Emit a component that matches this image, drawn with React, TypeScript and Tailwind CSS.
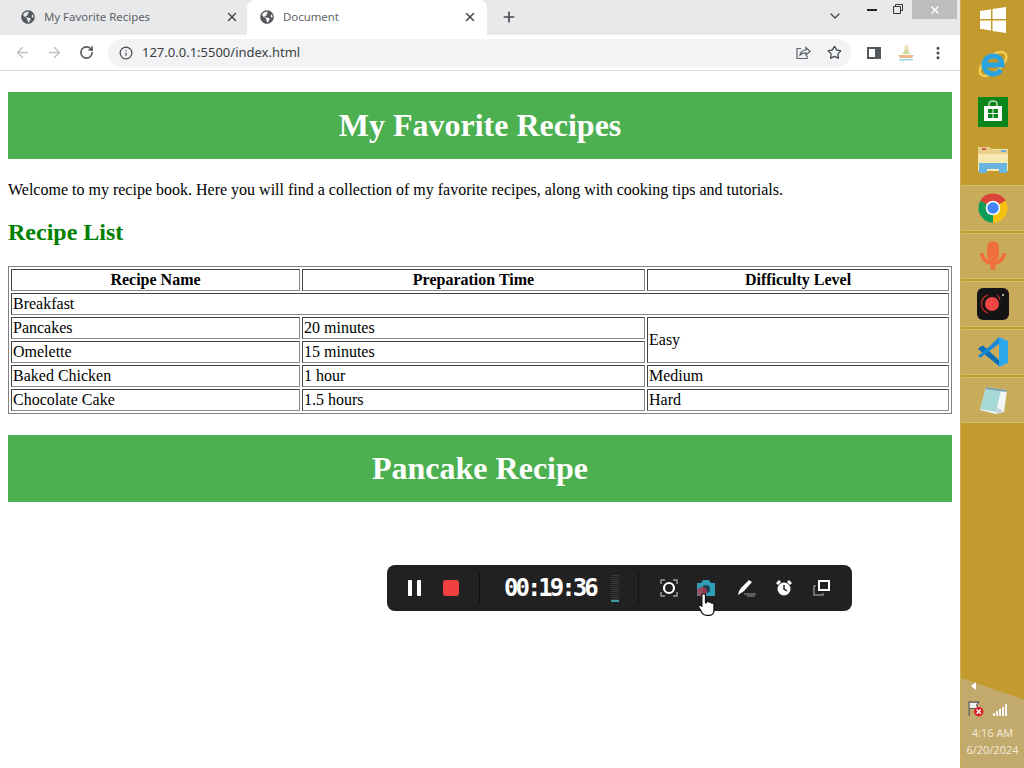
import { ArrowLeft, ArrowRight, ChevronDown, Info, MoreVertical, Plus, RotateCw, Star, X } from "lucide-react";
import { FaGlobeAmericas } from "react-icons/fa";

const recipes = [
  { name: "Pancakes", time: "20 minutes", level: "Easy", levelSpan: 2 },
  { name: "Omelette", time: "15 minutes" },
  { name: "Baked Chicken", time: "1 hour", level: "Medium" },
  { name: "Chocolate Cake", time: "1.5 hours", level: "Hard" },
];

const cell = "border border-t-[#444] border-l-[#444] border-r-[#888] border-b-[#888] p-px";

function Tab({ title, active }: { title: string; active?: boolean }) {
  return (
    <div
      className={
        active
          ? "w-[240px] h-[35px] flex items-center pl-[13px] pr-[10px] pb-[2px] bg-white rounded-t-lg"
          : "w-[239px] h-[35px] flex items-center pl-[13px] pr-[8px] pb-[2px]"
      }
    >
      <FaGlobeAmericas className="size-[14px] text-[#55585c] shrink-0" />
      <span className="ml-[9px] flex-1 text-[11.4px] text-[#5f6368]">{title}</span>
      <X className="size-[14px] text-[#45484c]" strokeWidth={2.5} />
    </div>
  );
}

function BrowserChrome() {
  return (
    <div className="h-[71px] border-b border-[#dadce0]">
      <div className="h-[35px] bg-[#e8e9eb] flex items-start pl-[8px]">
        <Tab title="My Favorite Recipes" />
        <Tab title="Document" active />
        <Plus className="size-[16px] ml-[14px] mt-[9px] text-[#45484c]" strokeWidth={2.5} />
        <div className="flex-1" />
        <ChevronDown className="size-[16px] mt-[8px] mr-[24px] text-[#45484c]" strokeWidth={2} />
        <div className="w-[10px] h-[2px] mt-[9px] mr-[16px] bg-[#222]" />
        <svg viewBox="0 0 10 10" className="size-[10px] mt-[4px] mr-[9px] text-[#333]" fill="none" stroke="currentColor">
          <path d="M2.500 2.500V.5h7v6h-2M.5 2.500h7v7h-7z" />
        </svg>
        <div className="w-[45px] h-[19px] mr-[3px] bg-[#bdbdbd] flex items-center justify-center">
          <X className="size-[12px] text-white" strokeWidth={3} />
        </div>
      </div>
      <div className="h-[35px] flex items-center pl-[14px] pr-[14px] bg-white">
        <ArrowLeft className="size-[17px] text-[#bcbfc3]" />
        <ArrowRight className="size-[17px] ml-[15px] text-[#bcbfc3]" />
        <RotateCw className="size-[15px] ml-[16px] text-[#55585c]" strokeWidth={2.5} />
        <div className="w-[743px] h-[28px] ml-[14px] rounded-full bg-[#f1f3f4] flex items-center pl-[11px] pr-[9px]">
          <Info className="size-[14px] text-[#45484c]" />
          <span className="ml-[9px] flex-1 text-[13px] text-[#3c4043]">127.0.0.1:5500/index.html</span>
          <svg viewBox="0 0 16 16" className="size-[16px] text-[#5f6368]" fill="none" stroke="currentColor" strokeWidth="1.200">
            <path d="M6 3.500H2v10h10v-3M5 10c.5-3 3-5 6-5V2.500L15 6.500 11 10V7.800c-2.500 0-4.500.7-6 2.200z" />
          </svg>
          <Star className="size-[15px] ml-[16px] text-[#45484c]" strokeWidth={2} />
        </div>
        <svg viewBox="0 0 14 14" className="size-[14px] ml-[16px]">
          <path fill="#55585c" fillRule="evenodd" d="M0 1h14v12H0zM2 3v8h6V3z" />
        </svg>
        <svg viewBox="0 0 20 20" className="size-[20px] ml-[15px]">
          <path fill="#efe0b8" d="M9 2h3l1 7H8z" />
          <path fill="#cfdc9c" d="M10 6l5 5H6z" />
          <path fill="#f0b98c" d="M2 12h16l-2 3H4z" />
          <path fill="#9ad6e8" d="M3 16h14v1.500H3z" />
        </svg>
        <MoreVertical className="size-[16px] ml-[14px] text-[#45484c]" strokeWidth={2.5} />
      </div>
    </div>
  );
}

function RecipeTable() {
  return (
    <table className="w-[944px] table-fixed border-separate border-spacing-[2px] border border-[#808080] text-[16px] leading-[18px] text-black">
      <colgroup>
        <col className="w-[289px]" />
        <col className="w-[343px]" />
        <col className="w-[302px]" />
      </colgroup>
      <thead>
        <tr>
          <th className={cell}>Recipe Name</th>
          <th className={cell}>Preparation Time</th>
          <th className={cell}>Difficulty Level</th>
        </tr>
      </thead>
      <tbody>
        <tr>
          <td className={cell} colSpan={3}>Breakfast</td>
        </tr>
        {recipes.map((r) => (
          <tr key={r.name}>
            <td className={cell}>{r.name}</td>
            <td className={cell}>{r.time}</td>
            {r.level && (
              <td className={cell} rowSpan={r.levelSpan ?? 1}>{r.level}</td>
            )}
          </tr>
        ))}
      </tbody>
    </table>
  );
}

function Page() {
  return (
    <main className="px-[8px] pt-[21px] font-['Liberation_Serif',serif]">
      <h1 className="bg-[#4caf50] text-white text-center font-bold text-[32px] leading-[37px] py-[15px]">
        My Favorite Recipes
      </h1>
      <p className="mt-[22px] text-[16px] leading-[18px] text-black">
        Welcome to my recipe book. Here you will find a collection of my favorite recipes, along with cooking tips and
        tutorials.
      </p>
      <h2 className="mt-[20px] mb-[20px] text-[24px] leading-[27px] font-bold text-[#008000]">Recipe List</h2>
      <RecipeTable />
      <h1 className="mt-[21px] bg-[#4caf50] text-white text-center font-bold text-[32px] leading-[37px] py-[15px]">
        Pancake Recipe
      </h1>
    </main>
  );
}

function RecorderBar() {
  return (
    <div className="absolute left-[387px] top-[565px] w-[465px] h-[46px] rounded-lg bg-[#212121] flex items-center text-white">
      <div className="ml-[21px] flex gap-[5px]">
        <div className="w-[4px] h-[16px] rounded-[1px] bg-white" />
        <div className="w-[4px] h-[16px] rounded-[1px] bg-white" />
      </div>
      <div className="ml-[22px] size-[16px] rounded-[3px] bg-[#f04040]" />
      <div className="ml-[20px] w-px h-[32px] bg-[#111]" />
      <span className="ml-[24px] w-[94px] font-['DejaVu_Sans_Mono',monospace] font-bold text-[24px] leading-none tracking-[-3px] whitespace-nowrap">
        00:19:36
      </span>
      <div className="ml-[13px] w-[8px] h-[27px] bg-[repeating-linear-gradient(0deg,#3a3a3a_0,#3a3a3a_1px,#212121_1px,#212121_2px)] border-b-2 border-[#3f9a9a]" />
      <div className="ml-[19px] w-px h-[32px] bg-[#111]" />
      <svg viewBox="0 0 18 18" className="size-[18px] ml-[21px]" fill="none">
        <path stroke="#999" strokeWidth="1.500" d="M1 5V1h4M13 1h4v4M17 13v4h-4M5 17H1v-4" />
        <circle cx="9" cy="9" r="5" stroke="#fff" strokeWidth="2.200" />
      </svg>
      <svg viewBox="0 0 22 20" className="w-[22px] h-[20px] ml-[17px]">
        <path fill="#2f9fb8" d="M2 5h4l2-3h6l2 3h4v13H2z" />
        <circle cx="11" cy="11" r="4" fill="#24414f" />
        <circle cx="7" cy="14" r="5" fill="#b03a50" opacity="0.8" />
      </svg>
      <svg viewBox="0 0 22 18" className="w-[22px] h-[18px] ml-[18px]" fill="none">
        <path fill="#fff" d="M14 1l3 2-8 9-3 2-3 2 1-4 2-3z" />
        <path stroke="#999" d="M9 15h12M12 17h8" />
      </svg>
      <svg viewBox="0 0 18 18" className="size-[18px] ml-[18px]">
        <circle cx="9" cy="10" r="6.500" fill="#fff" />
        <path fill="#fff" d="M1 4l3-3 2 2-3 3zM17 4l-3-3-2 2 3 3z" />
        <path stroke="#212121" strokeWidth="1.500" fill="none" d="M9 6v4l3 2" />
      </svg>
      <svg viewBox="0 0 18 18" className="size-[18px] ml-[20px]" fill="none">
        <path stroke="#888" strokeWidth="1.500" d="M3 7H1v9h9v-2" />
        <rect x="6" y="2" width="10" height="9" stroke="#fff" strokeWidth="2" />
      </svg>
      <svg viewBox="0 0 24 24" className="absolute left-[308px] top-[26px] size-[26px]">
        <path
          fill="#fff"
          stroke="#111"
          strokeWidth="1.200"
          strokeLinejoin="round"
          d="M8 2.500c1 0 1.700.7 1.700 1.700V11l1-.3V9.500c1.200-.6 2.200 0 2.300.9.900-.6 2-.2 2.300.8 1-.5 2.200 0 2.200 1.300V18c0 2.500-2 4.500-4.500 4.500h-2.500c-1.800 0-3-.8-4-2.300L3.500 15c-.8-1.300 1-2.700 2.200-1.500l.6.700V4.200c0-1 .7-1.700 1.700-1.700z"
        />
      </svg>
    </div>
  );
}

function TaskItem({ running, children }: { running?: boolean; children: React.ReactNode }) {
  return (
    <div
      className={
        running
          ? "relative h-[46px] my-px flex items-center justify-center bg-[#c9ab5c] border-y border-[#d3bb78]"
          : "relative h-[48px] flex items-center justify-center"
      }
    >
      {children}
    </div>
  );
}

function Taskbar() {
  return (
    <aside className="relative w-[64px] h-[768px] overflow-hidden bg-[#c39a2e] flex flex-col border-l border-[#cfae58]">
      <svg viewBox="0 0 64 100" className="absolute left-0 bottom-0 w-[64px] h-[100px]">
        <path fill="#c2a96c" d="M0 10L64 32V100H0z" />
      </svg>
      <div className="relative h-[40px] flex items-center justify-center">
        <svg viewBox="0 0 28 28" className="size-[28px]">
          <path fill="#fff" d="M1 5l11-1.700V13H1zM13.500 3L27 1v12H13.500zM1 14.500h11v10L1 22.800zM13.500 14.500H27V27l-13.500-2z" />
        </svg>
      </div>
      <TaskItem>
        <svg viewBox="0 0 32 32" className="size-[32px]" fill="none">
          <ellipse cx="16" cy="16" rx="16" ry="8" transform="rotate(-40 16 16)" stroke="#f4cf50" strokeWidth="2.500" />
          <path stroke="#2aa3e0" strokeWidth="5" d="M7 17h18c0-6-4-9-9-9s-9 4-9 9 4 9 9 9c4 0 6-1.500 8-4" />
        </svg>
      </TaskItem>
      <TaskItem>
        <svg viewBox="0 0 30 30" className="size-[30px]">
          <rect width="30" height="30" fill="#08851b" />
          <path fill="none" stroke="#b8ddb8" strokeWidth="1.500" d="M11 9V7c0-4 8-4 8 0v2" />
          <path fill="#fff" d="M6 9h18v15H6z" />
          <path fill="#08851b" d="M10 12h4.500v4H10zM15.500 12H20v4h-4.500zM10 17h4.500v4H10zM15.500 17H20v4h-4.500z" />
        </svg>
      </TaskItem>
      <TaskItem>
        <svg viewBox="0 0 32 30" className="w-[32px] h-[30px]">
          <path fill="#f7e7b0" d="M1 4h30v22H1z" />
          <path fill="#e9d089" d="M1 2h12l2 3h16v4H1z" />
          <path fill="#d9534f" d="M5 3h4v2H5z" />
          <path fill="#6aa9d8" d="M24 5h5v2h-5z" />
          <path fill="#67b5e0" d="M2 18h28v10H22v-4H10v4H2z" />
        </svg>
      </TaskItem>
      <TaskItem running>
        <svg viewBox="0 0 48 48" className="size-[32px]">
          <path fill="#db4437" d="M24 24L5 13A22 22 0 0 1 43 13Z" />
          <path fill="#f4c20d" d="M24 24L43 13A22 22 0 0 1 24 46Z" />
          <path fill="#0f9d58" d="M24 24L24 46A22 22 0 0 1 5 13Z" />
          <circle cx="24" cy="24" r="11" fill="#fff" />
          <circle cx="24" cy="24" r="8.500" fill="#4285f4" />
        </svg>
      </TaskItem>
      <TaskItem running>
        <svg viewBox="0 0 28 32" className="w-[28px] h-[32px]" fill="none">
          <rect x="8" y="1" width="12" height="20" rx="6" fill="#f0703c" />
          <path stroke="#f0703c" strokeWidth="4" d="M3 13c0 6 5 10 11 10s11-4 11-10" />
          <path stroke="#f0703c" strokeWidth="5" d="M14 23v7" />
        </svg>
      </TaskItem>
      <TaskItem running>
        <svg viewBox="0 0 32 32" className="size-[32px]">
          <rect width="32" height="32" rx="6" fill="#141414" />
          <path stroke="#a82a2a" strokeWidth="1.500" fill="none" d="M11 7a9.500 9.500 0 0 0 0 18M20 7a9.500 9.500 0 0 1 3 5" />
          <circle cx="15" cy="16" r="7" fill="#f04545" />
          <circle cx="26" cy="7" r="1" fill="#ddd" />
        </svg>
      </TaskItem>
      <TaskItem running>
        <svg viewBox="0 0 32 32" className="size-[32px]">
          <path fill="#0a6fb5" d="M3 11l3-1.500 17 15.500-1 5L1 13z" />
          <path fill="#1b8ad3" d="M1 20l2 2 20-15-1-6-8 8z" />
          <path fill="#28a7ea" d="M22 1l9 4v22l-9 4z" />
        </svg>
      </TaskItem>
      <TaskItem running>
        <svg viewBox="0 0 32 32" className="size-[32px]">
          <path fill="#f2f6f6" d="M9 3l21 3-3 22-8 2L3 26z" />
          <path fill="#a6d8d6" d="M9 4l15 2-5 22L3 25z" />
          <path fill="#7b9ea6" d="M9 3l21 3-.5 2-21-3z" />
          <path fill="#c8d4d6" d="M19 30l1-7 7 5z" />
        </svg>
      </TaskItem>
      <div className="relative mt-auto flex flex-col items-center pb-[10px] font-['Open_Sans',sans-serif] text-[11px] leading-[17px] text-[#f3ecdc]">
        <div className="self-start ml-[10px] w-0 h-0 border-y-[4px] border-y-transparent border-r-[5px] border-r-white" />
        <div className="self-start ml-[6px] mt-[10px] mb-[7px] flex items-end gap-[8px]">
          <svg viewBox="0 0 16 16" className="size-[17px]">
            <path fill="#f2f2f2" stroke="#555" d="M2 1v14M2 2h9l-2 3 2 3H2" />
            <circle cx="11" cy="11" r="4.500" fill="#d8232a" />
            <path stroke="#fff" strokeWidth="1.200" d="M9 9l4 4M13 9l-4 4" />
          </svg>
          <svg viewBox="0 0 16 14" className="w-[16px] h-[14px]" fill="#f5f5f5">
            <path d="M1 10h2v3H1zM4 8h2v5H4zM7 6h2v7H7zM10 4h2v9h-2zM13 1h2v12h-2z" />
          </svg>
        </div>
        <span>4:16 AM</span>
        <span className="whitespace-nowrap">6/20/2024</span>
      </div>
    </aside>
  );
}

export default function App() {
  return (
    <div className="relative w-[1024px] h-[768px] overflow-hidden flex bg-white font-['Noto_Sans',sans-serif]">
      <div className="w-[960px]">
        <BrowserChrome />
        <Page />
      </div>
      <Taskbar />
      <RecorderBar />
    </div>
  );
}
